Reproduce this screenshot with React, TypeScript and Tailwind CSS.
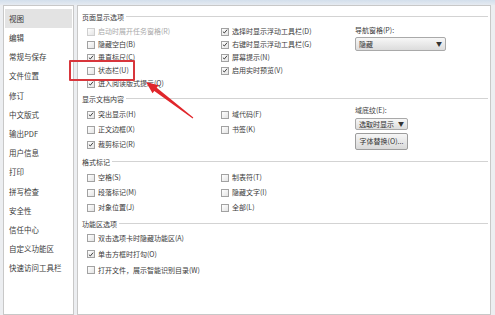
import type { ReactNode } from 'react';

const font = { fontFamily: '"Noto Sans CJK SC", "Noto Sans", sans-serif' };

const sideItems = ['视图', '编辑', '常规与保存', '文件位置', '修订', '中文版式', '输出PDF', '用户信息', '打印', '拼写检查', '安全性', '信任中心', '自定义功能区', '快速访问工具栏'];

// Small square checkbox like the Office dialog
function Check({ label, checked = false, disabled = false }: { label: string; checked?: boolean; disabled?: boolean }) {
  return (
    <div className="flex items-center gap-[3px] h-full">
      <div
        className={`w-[8px] h-[8px] flex-shrink-0 border bg-gradient-to-br from-white to-[#e4e4e4] flex items-center justify-center ${
          disabled ? 'border-[#cfcfcf]' : 'border-[#a2a2a2]'
        }`}
      >
        {checked && (
          <svg viewBox="0 0 8 8" className="w-[7px] h-[7px]">
            <path d="M1.2 4.2 L3.1 6 L6.8 1.6" fill="none" stroke="#3c3c3c" strokeWidth="1.3" />
          </svg>
        )}
      </div>
      <span className={`text-[7px] leading-none whitespace-nowrap ${disabled ? 'text-[#a9a9a9]' : 'text-[#3a3a3a]'}`}>{label}</span>
    </div>
  );
}

function SectionHeader({ title, className = '' }: { title: string; className?: string }) {
  return (
    <div className={`flex items-center h-[12px] gap-[2px] ${className}`}>
      <span className="text-[7px] leading-none text-[#3a3a3a] whitespace-nowrap">{title}</span>
      <div className="flex-1 h-[2px] border-t border-[#d3d3d3] border-b-white" />
    </div>
  );
}

type Row = [ReactNode, ReactNode?];

function Rows({ rows, rowH }: { rows: Row[]; rowH: string }) {
  return (
    <div className="flex flex-col">
      {rows.map((r, i) => (
        <div key={i} className={`flex ${rowH}`}>
          <div className="w-[134px]">{r[0]}</div>
          <div className="w-[134px]">{r[1]}</div>
        </div>
      ))}
    </div>
  );
}

function Select({ value, width }: { value: string; width: string }) {
  return (
    <div className={`${width} h-full flex items-center justify-between px-[3px] border border-[#a9a9a9] rounded-[2px] bg-gradient-to-b from-[#f7f7f7] to-[#dcdcdc]`}>
      <span className="text-[7px] leading-none text-[#333]">{value}</span>
      <span className="text-[6px] leading-none text-[#333]">▼</span>
    </div>
  );
}

export default function App() {
  return (
    <div className="relative w-[495px] h-[315px] overflow-hidden bg-[#eceef1] flex flex-col" style={font}>
      <div className="h-[5px] bg-gradient-to-b from-[#d3dfec] to-[#e6ebf1]" />
      <div className="flex flex-1 min-h-0">
        {/* Left category list */}
        <div className="ml-[3px] w-[71px] border border-[#c8c8c8] bg-white pt-[3px] flex flex-col">
          {sideItems.map((s, i) => (
            <div
              key={s}
              className={`mx-[1px] h-[19.2px] flex items-center pl-[4px] text-[7.5px] leading-none text-[#3a3a3a] ${
                i === 0 ? 'bg-[#e3e3e3]' : ''
              }`}
            >
              {s}
            </div>
          ))}
        </div>

        {/* Right options panel */}
        <div className="ml-[3px] w-[414px] border border-[#c8c8c8] bg-white pl-[4px] pr-[2px] flex flex-col">
          <SectionHeader title="页面显示选项" className="mt-[5px]" />
          <div className="flex mt-[2px] pl-[5px]">
            <Rows
              rowH="h-[13px]"
              rows={[
                [<Check label="启动时展开任务窗格(R)" disabled />, <Check label="选择时显示浮动工具栏(D)" checked />],
                [<Check label="隐藏空白(B)" />, <Check label="右键时显示浮动工具栏(G)" checked />],
                [<Check label="垂直标尺(C)" checked />, <Check label="屏幕提示(N)" checked />],
                [<Check label="状态栏(U)" />, <Check label="启用实时预览(V)" checked />],
                [<Check label="进入阅读版式提示(Q)" checked />],
              ]}
            />
            <div className="flex flex-col">
              <div className="h-[10px] flex items-center text-[7px] leading-none text-[#3a3a3a]">导航窗格(P):</div>
              <div className="mt-[2px] h-[14px]">
                <Select value="隐藏" width="w-[91px]" />
              </div>
            </div>
          </div>

          <SectionHeader title="显示文档内容" className="mt-[3px]" />
          <div className="flex mt-[2px] pl-[5px]">
            <Rows
              rowH="h-[15px]"
              rows={[
                [<Check label="突出显示(H)" checked />, <Check label="域代码(F)" />],
                [<Check label="正文边框(X)" />, <Check label="书签(K)" />],
                [<Check label="裁剪标记(R)" checked />],
              ]}
            />
            <div className="flex flex-col -mt-[1px]">
              <div className="h-[8px] flex items-center text-[7px] leading-none text-[#3a3a3a]">域底纹(E):</div>
              <div className="mt-[4px] h-[12px]">
                <Select value="选取时显示" width="w-[53px]" />
              </div>
              <div className="mt-[3px] h-[17px] w-[53px] flex items-center justify-center border border-[#9d9d9d] rounded-[2px] bg-gradient-to-b from-[#f6f6f6] to-[#d9d9d9] text-[7px] leading-none text-[#333] whitespace-nowrap">
                字体替换(O)...
              </div>
            </div>
          </div>

          <SectionHeader title="格式标记" className="mt-[4px]" />
          <div className="mt-[2px] pl-[5px]">
            <Rows
              rowH="h-[15px]"
              rows={[
                [<Check label="空格(S)" />, <Check label="制表符(T)" />],
                [<Check label="段落标记(M)" />, <Check label="隐藏文字(I)" />],
                [<Check label="对象位置(J)" />, <Check label="全部(L)" />],
              ]}
            />
          </div>

          <SectionHeader title="功能区选项" className="mt-[3px]" />
          <div className="pl-[5px] flex flex-col">
            <div className="h-[16px]"><Check label="双击选项卡时隐藏功能区(A)" /></div>
            <div className="h-[16px]"><Check label="单击方框时打勾(O)" checked /></div>
            <div className="h-[16px]"><Check label="打开文件，展示智能识别目录(W)" /></div>
          </div>
        </div>
      </div>

      {/* Red annotation box and arrow laid over the dialog */}
      <div className="absolute left-[69px] top-[60px] w-[66px] h-[21px] border-2 border-[#d8363c] rounded-[1px]" />
      <svg className="absolute left-0 top-0 pointer-events-none" width="495" height="315" viewBox="0 0 495 315">
        <polygon
          points="146,82 158.5,85.3 156.7,87.7 193.3,117.6 192.7,118.4 154.3,90.9 152.5,93.3"
          fill="#e0262b"
        />
      </svg>
    </div>
  );
}
